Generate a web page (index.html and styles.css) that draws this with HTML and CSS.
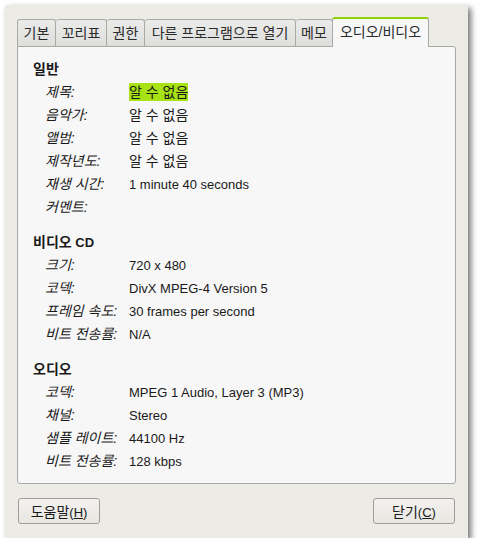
FILE: index.html
```html
<!DOCTYPE html>
<html lang="ko">
<head>
<meta charset="utf-8">
<link rel="stylesheet" href="styles.css">
</head>
<body>
<div class="window">
  <div class="tabs">
    <div class="tab t1"><span class="ko">기본</span></div>
    <div class="tab t2"><span class="ko">꼬리표</span></div>
    <div class="tab t3"><span class="ko">권한</span></div>
    <div class="tab t4"><span class="ko">다른 프로그램으로 열기</span></div>
    <div class="tab t5"><span class="ko">메모</span></div>
    <div class="tab active t6"><span class="ko">오디오/비디오</span></div>
  </div>
  <div class="panel">
    <div class="section">
      <div class="heading"><span class="ko">일반</span></div>
      <div class="row"><span class="label ko">제목:</span><span class="value"><span class="hl ko">알 수 없음</span></span></div>
      <div class="row"><span class="label ko">음악가:</span><span class="value ko">알 수 없음</span></div>
      <div class="row"><span class="label ko">앨범:</span><span class="value ko">알 수 없음</span></div>
      <div class="row"><span class="label ko">제작년도:</span><span class="value ko">알 수 없음</span></div>
      <div class="row"><span class="label ko">재생 시간:</span><span class="value">1 minute 40 seconds</span></div>
      <div class="row"><span class="label ko">커멘트:</span><span class="value"></span></div>
    </div>
    <div class="section">
      <div class="heading"><span class="ko">비디오</span> CD</div>
      <div class="row"><span class="label ko">크기:</span><span class="value">720 x 480</span></div>
      <div class="row"><span class="label ko">코덱:</span><span class="value">DivX MPEG-4 Version 5</span></div>
      <div class="row"><span class="label ko">프레임 속도:</span><span class="value">30 frames per second</span></div>
      <div class="row"><span class="label ko">비트 전송률:</span><span class="value">N/A</span></div>
    </div>
    <div class="section">
      <div class="heading"><span class="ko">오디오</span></div>
      <div class="row"><span class="label ko">코덱:</span><span class="value">MPEG 1 Audio, Layer 3 (MP3)</span></div>
      <div class="row"><span class="label ko">채널:</span><span class="value">Stereo</span></div>
      <div class="row"><span class="label ko">샘플 레이트:</span><span class="value">44100 Hz</span></div>
      <div class="row"><span class="label ko">비트 전송률:</span><span class="value">128 kbps</span></div>
    </div>
  </div>
  <div class="buttons">
    <button class="btn"><span class="ko">도움말</span>(<u>H</u>)</button>
    <button class="btn"><span class="ko">닫기</span>(<u>C</u>)</button>
  </div>
</div>
</body>
</html>
```
FILE: styles.css
```css
html, body {
  margin: 0;
  padding: 0;
  background: #ffffff;
}
body {
  font-family: "Liberation Sans", "Noto Sans CJK KR", sans-serif;
  font-size: 13px;
  color: #1a1a1a;
}
.ko {
  font-size: 14px;
}
.window {
  margin: 5px 0 0 5px;
  width: 463px;
  height: 533px;
  box-sizing: border-box;
  background: #edebe6;
  box-shadow: 3px 3px 6px rgba(0, 0, 0, 0.55);
  padding: 12px 12px 0 12px;
  display: flex;
  flex-direction: column;
}
.tabs {
  display: flex;
  align-items: flex-end;
  height: 29px;
  position: relative;
  z-index: 1;
}
.tab {
  box-sizing: border-box;
  height: 27px;
  border: 1px solid #a9a9a6;
  border-bottom: none;
  border-left: none;
  border-radius: 3px 3px 0 0;
  background: linear-gradient(#ebebea, #dededc);
  color: #2a2a2a;
  text-align: center;
  line-height: 26px;
  white-space: nowrap;
}
.t1 { width: 39px; border-left: 1px solid #a9a9a6; }
.t2 { width: 51px; }
.t3 { width: 38px; }
.t4 { width: 151px; }
.t5 { width: 37px; }
.tab.active {
  width: 97px;
  height: 30px;
  background: #f7f7f7;
  border-top: 2px solid #8fd400;
  border-left: 1px solid #a9a9a6;
  line-height: 26px;
  margin-bottom: -1px;
  margin-left: -1px;
}
.panel {
  box-sizing: border-box;
  width: 439px;
  height: 438px;
  background: #f7f7f7;
  border: 1px solid #a9a9a6;
  border-radius: 0 3px 3px 3px;
  padding: 11px 0 0 15px;
}
.section + .section {
  margin-top: 12px;
}
.heading {
  height: 23px;
  line-height: 23px;
  font-weight: bold;
}
.row {
  display: flex;
  align-items: baseline;
  height: 23px;
  line-height: 23px;
  padding-left: 12px;
}
.label {
  width: 84px;
  flex: none;
  font-style: italic;
}
.hl {
  background: #a6e214;
  padding: 1px 0;
  line-height: 16px;
}
.buttons {
  display: flex;
  justify-content: space-between;
  margin-top: 14px;
  padding: 0 1px;
}
.btn {
  font-family: "Liberation Sans", "Noto Sans CJK KR", sans-serif;
  font-size: 13px;
  color: #1a1a1a;
  width: 82px;
  height: 26px;
  border: 1px solid #9e9d99;
  border-radius: 3px;
  background: linear-gradient(#f3f2ef, #e8e6e1);
  padding: 0;
}
```
